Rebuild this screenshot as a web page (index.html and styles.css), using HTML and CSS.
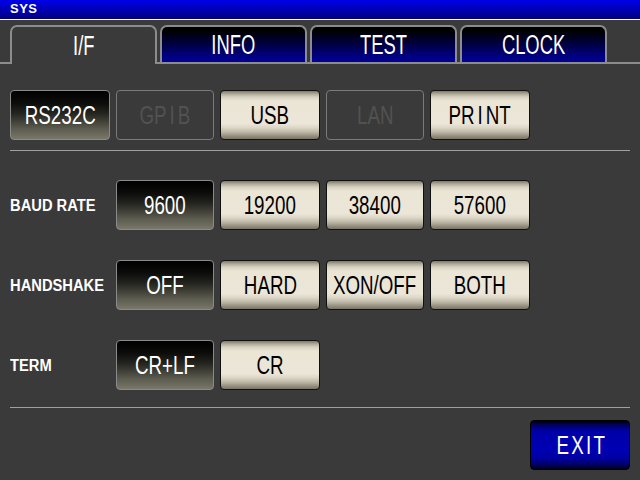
FILE: index.html
```html
<!DOCTYPE html>
<html>
<head>
<meta charset="utf-8">
<link rel="stylesheet" href="styles.css">
</head>
<body>
<div class="screen">
  <div class="titlebar"><span class="title">SYS</span></div>
  <div class="tabs">
    <div class="tab active"><span class="t">I/F</span></div>
    <div class="tab"><span class="t">INFO</span></div>
    <div class="tab"><span class="t">TEST</span></div>
    <div class="tab"><span class="t">CLOCK</span></div>
  </div>
  <div class="content">
    <div class="grid">
      <div class="btn sel"><span class="t">RS232C</span></div>
      <div class="btn dis"><span class="t">GP<span class="wide">I</span>B</span></div>
      <div class="btn"><span class="t">USB</span></div>
      <div class="btn dis"><span class="t">LAN</span></div>
      <div class="btn"><span class="t">PR<span class="wide">I</span>NT</span></div>
    </div>
    <div class="sep first"></div>
    <div class="grid row">
      <div class="label"><span class="lt">BAUD RATE</span></div>
      <div class="btn sel"><span class="t">9600</span></div>
      <div class="btn"><span class="t">19200</span></div>
      <div class="btn"><span class="t">38400</span></div>
      <div class="btn"><span class="t">57600</span></div>
    </div>
    <div class="grid row">
      <div class="label"><span class="lt">HANDSHAKE</span></div>
      <div class="btn sel"><span class="t">OFF</span></div>
      <div class="btn"><span class="t">HARD</span></div>
      <div class="btn"><span class="t">XON/OFF</span></div>
      <div class="btn"><span class="t">BOTH</span></div>
    </div>
    <div class="grid row">
      <div class="label"><span class="lt">TERM</span></div>
      <div class="btn sel"><span class="t">CR+LF</span></div>
      <div class="btn"><span class="t">CR</span></div>
    </div>
    <div class="sep last"></div>
    <div class="footer">
      <div class="btn exit"><span class="t">EXIT</span></div>
    </div>
  </div>
</div>
</body>
</html>
```
FILE: styles.css
```css
html, body {
  margin: 0;
  padding: 0;
  background: #3a3a3a;
}
.screen {
  width: 640px;
  height: 480px;
  overflow: hidden;
  background: #3a3a3a;
  font-family: "Liberation Sans", sans-serif;
}
.titlebar {
  height: 19px;
  border-bottom: 1px solid #ffffff;
  background: linear-gradient(#0000ea, #0000a0 70%, #00007a);
  display: flex;
  align-items: center;
  padding-left: 10px;
}
.title {
  font-weight: bold;
  font-size: 13px;
  letter-spacing: 0.5px;
  color: #ffffff;
  margin-top: -3px;
}
.t {
  display: inline-block;
  white-space: nowrap;
  transform: scaleX(0.75);
}
.wide {
  padding: 0 4px;
}
.tabs {
  display: flex;
  align-items: flex-start;
  gap: 3px;
  padding: 5px 0 0 10px;
  height: 37px;
  border-bottom: 2px solid #8c8c8c;
}
.tab {
  box-sizing: border-box;
  width: 147px;
  height: 37px;
  border: 2px solid #8c8c8c;
  border-bottom: none;
  border-radius: 7px 7px 0 0;
  background: linear-gradient(#000000 10%, #000044 50%, #00009c);
  color: #ffffff;
  font-size: 27px;
  display: flex;
  align-items: center;
  justify-content: center;
  padding-top: 1px;
}
.tab .t {
  transform: scaleX(0.68);
}
.tab.active {
  height: 39px;
  margin-bottom: -2px;
  background: #3a3a3a;
}
.content {
  padding: 26px 10px 0 10px;
}
.grid {
  display: grid;
  grid-template-columns: 100px 98px 100px 98px 100px;
  column-gap: 6px;
  height: 50px;
}
.row {
  margin-top: 30px;
}
.sep {
  height: 1px;
  background: #a0a0a0;
}
.sep.first {
  margin-top: 10px;
  margin-bottom: -1px;
}
.sep.last {
  margin-top: 17px;
}
.label {
  font-weight: bold;
  font-size: 16px;
  color: #ffffff;
  display: flex;
  align-items: center;
  padding-top: 1px;
}
.lt {
  display: inline-block;
  white-space: nowrap;
  transform: scaleX(0.92);
  transform-origin: left center;
}
.btn {
  box-sizing: border-box;
  height: 50px;
  border: 1px solid #101010;
  border-radius: 4px;
  display: flex;
  align-items: center;
  justify-content: center;
  font-size: 25px;
  color: #000000;
  background: linear-gradient(#7e7868 0px, #b0aa9a 3px, #d6d0c0 6px, #ebe5d6 10px, #ece6d8 68%, #ddd7c8 76%, #bcb6a6 86%, #948e7e 94%, #7a7464 100%);
}
.btn.sel {
  border-color: #8a8a8a;
  color: #ffffff;
  background: linear-gradient(#000000 0%, #0c0c0a 25%, #22221e 45%, #3e3e36 62%, #5a5a4e 78%, #6e6c5e 92%, #7a786a 100%);
}
.btn.dis {
  border-color: #7a7a7a;
  background: transparent;
  color: #525252;
}
.footer {
  display: flex;
  justify-content: flex-end;
  margin-top: 12px;
}
.btn.exit {
  width: 100px;
  color: #ffffff;
  border-color: #000000;
  letter-spacing: 3px;
  background: linear-gradient(#000000 0px, #000060 4px, #0000a8 10px, #0000b4 60%, #0000a0 78%, #000060 92%, #000010 100%);
}
.btn.exit .t {
  margin-right: -3px;
}
```
